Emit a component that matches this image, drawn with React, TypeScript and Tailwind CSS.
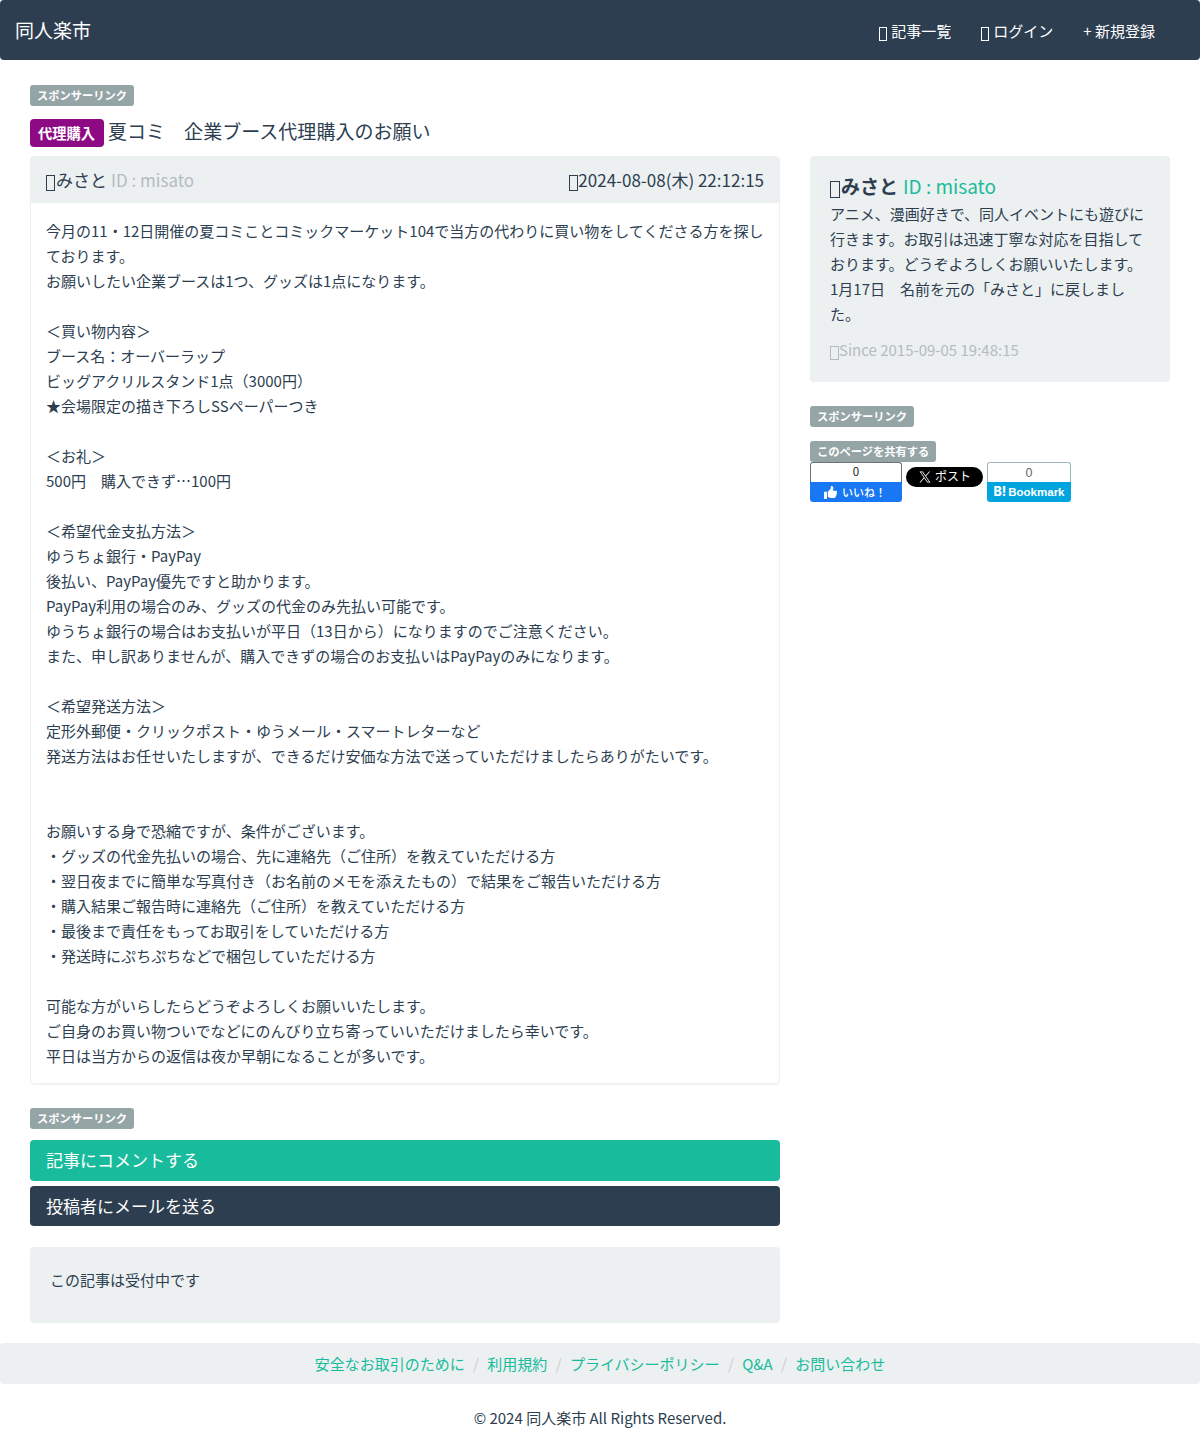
import React from "react";

const bodyLines = `今月の11・12日開催の夏コミことコミックマーケット104で当方の代わりに買い物をしてくださる方を探しております。
お願いしたい企業ブースは1つ、グッズは1点になります。

＜買い物内容＞
ブース名：オーバーラップ
ビッグアクリルスタンド1点（3000円）
★会場限定の描き下ろしSSペーパーつき

＜お礼＞
500円　購入できず…100円

＜希望代金支払方法＞
ゆうちょ銀行・PayPay
後払い、PayPay優先ですと助かります。
PayPay利用の場合のみ、グッズの代金のみ先払い可能です。
ゆうちょ銀行の場合はお支払いが平日（13日から）になりますのでご注意ください。
また、申し訳ありませんが、購入できずの場合のお支払いはPayPayのみになります。

＜希望発送方法＞
定形外郵便・クリックポスト・ゆうメール・スマートレターなど
発送方法はお任せいたしますが、できるだけ安価な方法で送っていただけましたらありがたいです。


お願いする身で恐縮ですが、条件がございます。
・グッズの代金先払いの場合、先に連絡先（ご住所）を教えていただける方
・翌日夜までに簡単な写真付き（お名前のメモを添えたもの）で結果をご報告いただける方
・購入結果ご報告時に連絡先（ご住所）を教えていただける方
・最後まで責任をもってお取引をしていただける方
・発送時にぷちぷちなどで梱包していただける方

可能な方がいらしたらどうぞよろしくお願いいたします。
ご自身のお買い物ついでなどにのんびり立ち寄っていいただけましたら幸いです。
平日は当方からの返信は夜か早朝になることが多いです。`;

function Glyph({ className = "" }: { className?: string }) {
  return <span className={`inline-block border border-current ${className}`} />;
}

function Label({ children }: { children: React.ReactNode }) {
  return (
    <span className="flex h-[21px] w-fit items-center rounded-[3px] bg-[#95a5a6] px-[7px] text-[11.25px] leading-none font-bold text-white">
      {children}
    </span>
  );
}

const footerLinks = ["安全なお取引のために", "利用規約", "プライバシーポリシー", "Q&A", "お問い合わせ"];

export default function App() {
  return (
    <div
      lang="ja"
      className="h-[1430px] w-[1200px] overflow-hidden bg-white font-['Noto_Sans_CJK_JP',sans-serif] text-[15px] leading-[25px] text-[#2c3e50]"
    >
      <nav className="flex h-[60px] items-center justify-between rounded bg-[#2c3e50] pr-[45px] pl-[15px] text-white">
        <a className="text-[19px] leading-5">同人楽市</a>
        <div className="flex gap-[30px]">
          <a className="flex items-center">
            <Glyph className="mt-[7px] mr-1 h-[14px] w-2" />
            記事一覧
          </a>
          <a className="flex items-center">
            <Glyph className="mt-[7px] mr-1 h-[14px] w-2" />
            ログイン
          </a>
          <a>+ 新規登録</a>
        </div>
      </nav>

      <div className="flex gap-[30px] px-[30px] pt-[25px]">
        <main className="w-[750px]">
          <Label>スポンサーリンク</Label>
          <h1 className="mt-[11px] flex h-[30px] items-center text-[19px] leading-[30px] tracking-[0.03px]">
            <span className="mt-0.5 mr-1 flex h-7 w-[74px] items-center justify-center rounded bg-[#8e0a85] pr-px text-[14.25px] font-bold text-white">
              代理購入
            </span>
            <span className="-mt-0.5">夏コミ　企業ブース代理購入のお願い</span>
          </h1>
          <section className="mt-[9px] rounded border border-[#ecf0f1] shadow-[0_1px_1px_rgba(0,0,0,0.05)]">
            <header className="flex h-[46px] items-center justify-between bg-[#ecf0f1] px-[15px] pb-0.5 text-[17px]">
              <div className="flex items-center">
                <Glyph className="mt-[7px] mr-px h-4 w-[9px]" />
                みさと<span className="ml-1 text-[#b4bcc2]">ID : misato</span>
              </div>
              <div className="flex items-center">
                <Glyph className="mt-[7px] h-4 w-[9px]" />
                2024-08-08(木) 22:12:15
              </div>
            </header>
            <div className="px-[15px] py-[15px] whitespace-pre-wrap">{bodyLines}</div>
          </section>
          <div className="mt-6">
            <Label>スポンサーリンク</Label>
          </div>
          <div className="mt-[11px] flex h-[41px] items-center rounded bg-[#18bc9c] px-4 pb-0.5 text-[17px] text-white">
            記事にコメントする
          </div>
          <div className="mt-[5px] flex h-10 items-center rounded bg-[#2c3e50] px-4 pb-0.5 text-[17px] text-white">
            投稿者にメールを送る
          </div>
          <div className="mt-[21px] h-[76px] rounded bg-[#ecf0f1] px-5 pt-5">この記事は受付中です</div>
        </main>

        <aside className="w-[360px] pt-[71px]">
          <section className="h-[226px] rounded bg-[#ecf0f1] px-5 pt-4">
            <h2 className="mb-0.5 flex h-[27px] items-center text-[19px]">
              <Glyph className="mt-[7px] mr-px h-[17px] w-[10px]" />
              <b>みさと</b>
              <span className="ml-[5px] text-[#18bc9c]">ID : misato</span>
            </h2>
            <p>
              アニメ、漫画好きで、同人イベントにも遊びに行きます。お取引は迅速丁寧な対応を目指しております。どうぞよろしくお願いいたします。
              <br />
              1月17日　名前を元の「みさと」に戻しました。
            </p>
            <p className="mt-[11px] flex items-center text-[#b4bcc2]">
              <Glyph className="mt-[6px] h-[14px] w-[9px]" />
              Since 2015-09-05 19:48:15
            </p>
          </section>
          <div className="mt-6">
            <Label>スポンサーリンク</Label>
          </div>
          <div className="mt-[14px]">
            <Label>このページを共有する</Label>
          </div>
          <div className="flex items-start">
            <div className="w-[92px] text-center text-[11px]">
              <div className="h-5 rounded-t-[3px] border border-b-0 border-[#6a7180] text-[11.5px] leading-4 text-[#1d2129]">0</div>
              <div className="flex h-5 items-center rounded-b-[3px] bg-[#1877f2] pl-[14px] leading-5 font-medium text-white">
                <svg viewBox="0 0 12 12" className="mr-[5px] h-[13px] w-[13px]" fill="currentColor">
                  <path d="M0 5.4h2.7V12H0zM3.5 5.2 6.2 2.6 6.4 0c1.6-.2 2.3.9 2.2 2.2L8.2 4.3h2.6c1.3 0 1.5 1.2.8 1.8.5.5.4 1.3-.2 1.7.3.6 0 1.3-.6 1.6.1.8-.3 1.6-1.3 1.6H5.7L3.5 10z" />
                </svg>
                いいね！
              </div>
            </div>
            <div className="mt-[5px] ml-1 flex h-5 w-[77px] items-center rounded-full bg-black pl-[13px] text-[12px] leading-5 text-white">
              <svg viewBox="0 0 24 24" className="mr-1 h-3 w-3" fill="currentColor">
                <path d="M14.1 10.3 22.3 1h-2l-7.1 8.1L7.6 1H1l8.6 12.2L1 23h2l7.5-8.6 6 8.6H23zm-2.6 3-.9-1.2L3.7 2.4h3l5.5 7.8.9 1.2 7.2 10.2h-3z" />
              </svg>
              <span className="-mt-0.5">ポスト</span>
            </div>
            <div className="ml-1 w-[84px] text-center font-['Liberation_Sans',sans-serif]">
              <div className="h-5 rounded-t-[3px] border border-b-0 border-[#9bb7bd] text-[12.5px] leading-5 text-[#666]">0</div>
              <div className="flex h-5 items-center justify-center rounded-b-[3px] bg-[#00a4de] text-[11.5px] leading-5 font-bold text-white">
                <span className="mr-[2px] font-['Inter',sans-serif] text-[12.5px] font-extrabold">B!</span>
                Bookmark
              </div>
            </div>
          </div>
        </aside>
      </div>

      <footer>
        <div className="mt-5 flex h-[41px] items-center justify-center rounded bg-[#ecf0f1] text-[#18bc9c]">
          {footerLinks.map((link, i) => (
            <React.Fragment key={link}>
              {i > 0 && <span className="w-[22.6px] text-center text-[#ccc]">/</span>}
              <a>{link}</a>
            </React.Fragment>
          ))}
        </div>
        <p className="mt-[21px] text-center">© 2024 同人楽市 All Rights Reserved.</p>
      </footer>
    </div>
  );
}
